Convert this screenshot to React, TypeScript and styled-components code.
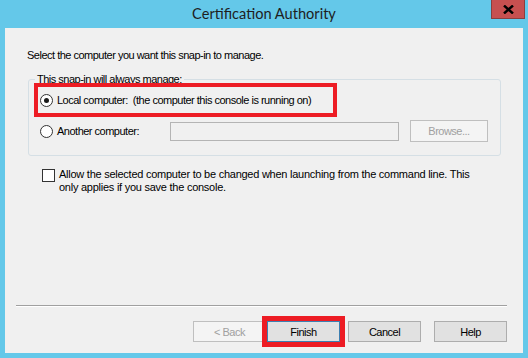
import React from 'react';
import styled, { createGlobalStyle, css } from 'styled-components';

const GlobalStyle = createGlobalStyle`
  html, body {
    margin: 0;
    padding: 0;
  }
  body {
    font-family: 'Liberation Sans', Arial, sans-serif;
    font-size: 11px;
    letter-spacing: -0.5px;
    color: #000;
  }
`;

const Window = styled.div`
  width: 528px;
  height: 358px;
  background: #64c8e9;
  display: flex;
  flex-direction: column;
  box-sizing: border-box;
`;

const TitleBar = styled.div`
  height: 28px;
  display: grid;
  grid-template-columns: 1fr auto 1fr;
  align-items: start;
`;

const Title = styled.div`
  grid-column: 2;
  padding-top: 4px;
  font-family: Lato, 'Noto Sans', sans-serif;
  font-size: 14.6px;
  letter-spacing: 0;
  line-height: 20px;
  color: #1e1e1e;
`;

const CloseButton = styled.div`
  grid-column: 3;
  justify-self: end;
  margin-right: 3px;
  width: 34px;
  height: 19px;
  box-sizing: border-box;
  background: #c75050;
  border: 1px solid #8a3f3f;
  border-top: none;
  display: flex;
  align-items: center;
  justify-content: center;
`;

const Client = styled.div`
  flex: 1;
  margin: 0 5px 5px 5px;
  background: #f0f0f0;
  display: flex;
  flex-direction: column;
  padding: 21px 0 11px 0;
  box-sizing: border-box;
`;

const Intro = styled.div`
  margin-left: 22px;
  line-height: 13px;
`;

const GroupBox = styled.fieldset`
  margin: 11px 22px 0 23px;
  padding: 1px 12px 13px 9px;
  border: 1px solid #d5dfe5;
  border-radius: 3px;
  min-width: 0;
`;

const Legend = styled.legend`
  margin-left: -3px;
  padding: 0 2px;
  line-height: 13px;
`;

const OptionRow = styled.div<{ $highlighted?: boolean }>`
  display: flex;
  align-items: center;
  gap: 4px;
  height: 26px;
  padding-left: 2px;
  ${(p) =>
    p.$highlighted &&
    css`
      width: 293px;
      outline: 4px solid #ed1c24;
    `}
`;

const OtherRow = styled.div`
  display: grid;
  grid-template-columns: 132px 229px 1fr;
  align-items: center;
  margin-top: 7px;
  height: 22px;
`;

const RadioLabel = styled.label`
  display: flex;
  align-items: center;
  gap: 4px;
  padding-left: 2px;
`;

const Radio = styled.span<{ $checked?: boolean }>`
  width: 13px;
  height: 13px;
  box-sizing: border-box;
  border: 1px solid #333;
  border-radius: 50%;
  background: #fff;
  display: flex;
  align-items: center;
  justify-content: center;
  &::after {
    content: '';
    width: 5px;
    height: 5px;
    border-radius: 50%;
    background: ${(p) => (p.$checked ? '#1a1a1a' : 'transparent')};
  }
`;

const TextBox = styled.div`
  height: 19px;
  box-sizing: border-box;
  border: 1px solid #b4b4b4;
  background: #f0f0f0;
`;

const Button = styled.div<{ $disabled?: boolean; $default?: boolean; $highlighted?: boolean }>`
  width: 73px;
  height: 21px;
  box-sizing: border-box;
  display: flex;
  align-items: center;
  justify-content: center;
  border: 1px solid #adadad;
  background: #e1e1e1;
  color: #000;
  ${(p) =>
    p.$disabled &&
    css`
      border-color: #bfbfbf;
      background: #f4f4f4;
      color: #a0a0a0;
    `}
  ${(p) =>
    p.$default &&
    css`
      border-color: #3c7fb1;
    `}
  ${(p) =>
    p.$highlighted &&
    css`
      outline: 5px solid #ed1c24;
    `}
`;

const BrowseButton = styled(Button)`
  justify-self: end;
  width: 78px;
  height: 22px;
`;

const CheckRow = styled.div`
  display: flex;
  align-items: flex-start;
  gap: 4px;
  margin: 12px 0 0 37px;
  line-height: 13px;
  letter-spacing: -0.25px;
`;

const CheckBox = styled.span`
  flex: none;
  width: 13px;
  height: 13px;
  margin-top: 1px;
  box-sizing: border-box;
  border: 1px solid #333;
  background: #fff;
`;

const Spacer = styled.div`
  flex: 1;
`;

const Separator = styled.div`
  height: 1px;
  margin: 0 16px 0 11px;
  background: #a0a0a0;
  border-bottom: 1px solid #fff;
`;

const ButtonRow = styled.div`
  display: flex;
  justify-content: flex-end;
  margin: 14px 16px 0 0;
`;

const ButtonGap = styled.div<{ $w: number }>`
  width: ${(p) => p.$w}px;
`;

export default function App() {
  return (
    <Window>
      <GlobalStyle />
      <TitleBar>
        <Title>Certification Authority</Title>
        <CloseButton>
          <svg width="11" height="9" viewBox="0 0 11 9">
            <path d="M1 0.5 L10 8.5 M10 0.5 L1 8.5" stroke="#000" strokeWidth="2.4" />
          </svg>
        </CloseButton>
      </TitleBar>
      <Client>
        <Intro>Select the computer you want this snap-in to manage.</Intro>
        <GroupBox>
          <Legend>This snap-in will always manage:</Legend>
          <OptionRow $highlighted>
            <Radio $checked />
            <span>Local computer:&nbsp; (the computer this console is running on)</span>
          </OptionRow>
          <OtherRow>
            <RadioLabel>
              <Radio />
              <span>Another computer:</span>
            </RadioLabel>
            <TextBox />
            <BrowseButton $disabled>Browse...</BrowseButton>
          </OtherRow>
        </GroupBox>
        <CheckRow>
          <CheckBox />
          <span>
            Allow the selected computer to be changed when launching from the command line. This
            <br />
            only applies if you save the console.
          </span>
        </CheckRow>
        <Spacer />
        <Separator />
        <ButtonRow>
          <Button $disabled>&lt; Back</Button>
          <ButtonGap $w={1} />
          <Button $default $highlighted>Finish</Button>
          <ButtonGap $w={8} />
          <Button>Cancel</Button>
          <ButtonGap $w={13} />
          <Button>Help</Button>
        </ButtonRow>
      </Client>
    </Window>
  );
}
